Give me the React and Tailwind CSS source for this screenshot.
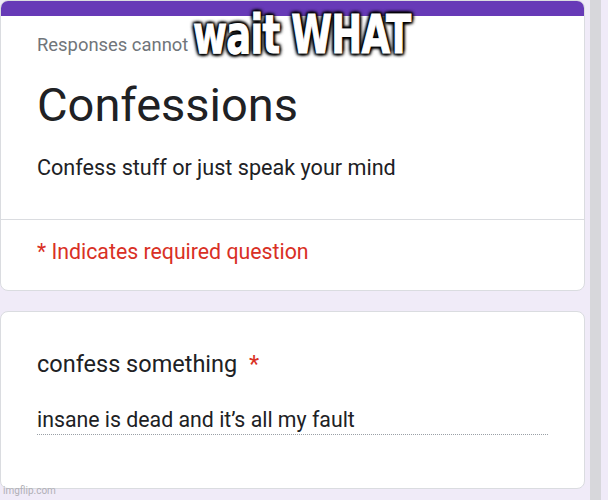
export default function App() {
  return (
    <div
      className="relative w-[608px] h-[500px] overflow-hidden bg-[#f0ebf8] flex"
      style={{ fontFamily: 'Roboto, "Noto Sans", sans-serif' }}
    >
      <div className="w-[585px] flex flex-col gap-[20px]">
        <div className="h-[291px] bg-white rounded-lg border border-[#dadce0] overflow-hidden flex flex-col">
          <div className="h-[15px] bg-[#673ab7] shrink-0" />
          <div className="px-[36px] pt-[18px]">
            <div className="text-[18.4px] leading-[22px] text-[#70757a]">Responses cannot</div>
            <div className="mt-[22px] text-[47px] leading-[54px] text-[#202124]">Confessions</div>
            <div className="mt-[22px] text-[21.6px] leading-[28px] text-[#202124]">
              Confess stuff or just speak your mind
            </div>
          </div>
          <div className="mt-[37px] border-t border-[#dadce0]" />
          <div className="px-[36px] pt-[18px] text-[21.3px] leading-[28px] text-[#d93025]">
            * Indicates required question
          </div>
        </div>
        <div className="h-[178px] bg-white rounded-lg border border-[#dadce0] px-[36px] pt-[37px]">
          <div className="text-[23.5px] leading-[30px] text-[#202124]">
            confess something <span className="ml-[6px] text-[#d93025]">*</span>
          </div>
          <div className="mt-[27px] w-[511px] border-b border-dotted border-[#9aa0a6] text-[21.3px] leading-[28px] text-[#202124]">
            insane is dead and it’s all my fault
          </div>
        </div>
      </div>
      <div className="ml-[5px] w-[11px] h-full bg-[#d7d7db]" />
      <div
        className="absolute left-[193px] top-[7px] origin-left scale-x-[0.76] text-white font-bold text-[54px] leading-[56px] tracking-[-1px]"
        style={{
          fontFamily: 'Impact, "Liberation Sans Narrow", "DejaVu Sans Condensed", sans-serif',
          WebkitTextStroke: '1px #fff',
          textShadow:
            '2px 2px 3px #000, -2px -2px 3px #000, 2px -2px 3px #000, -2px 2px 3px #000, 0 0 6px #000, 0 0 6px #000',
        }}
      >
        wait WHAT
      </div>
      <div className="absolute left-[3px] top-[485px] text-[10px] leading-[12px] text-[#b0b0b6]">
        imgflip.com
      </div>
    </div>
  )
}
